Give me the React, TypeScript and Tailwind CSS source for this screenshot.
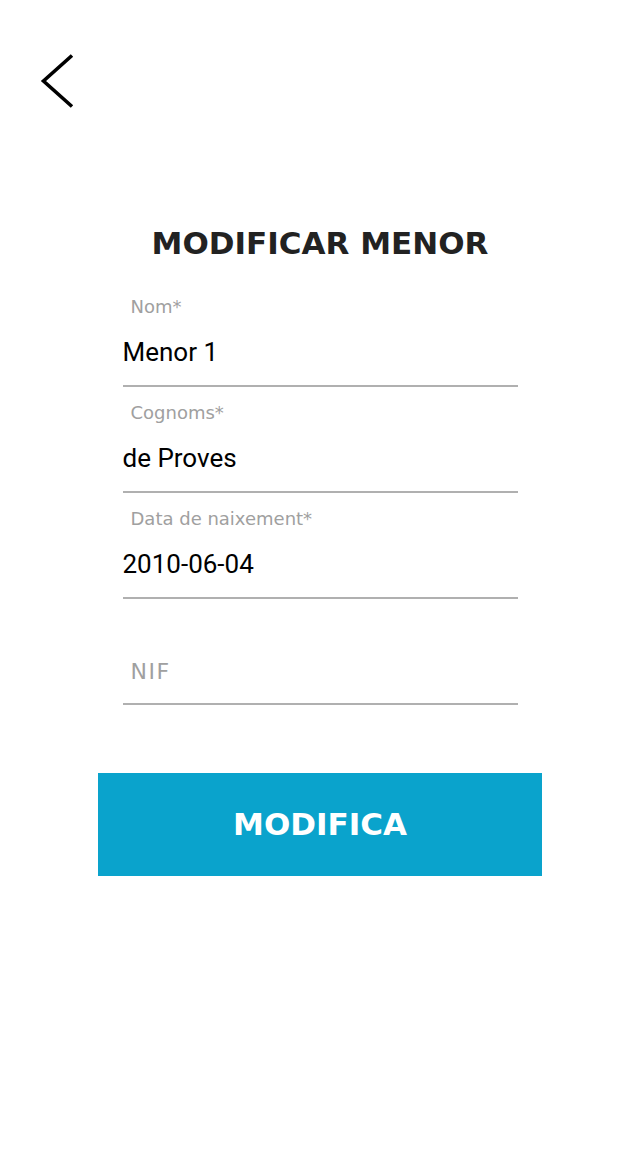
const fields = [
  { label: 'Nom*', value: 'Menor 1' },
  { label: 'Cognoms*', value: 'de Proves' },
  { label: 'Data de naixement*', value: '2010-06-04' },
];

export default function App() {
  return (
    <div className="min-h-[1158px] w-full bg-white font-['Roboto',sans-serif]">
      {/* back */}
      <div className="pl-[40px] pt-[54px]">
        <svg width="36" height="56" viewBox="0 0 36 56" fill="none">
          <path d="M32 1.5 L3.5 27 L32 52.5" stroke="#000" strokeWidth="3.6" strokeLinecap="butt" strokeLinejoin="miter" />
        </svg>
      </div>

      <h1 className="mt-[113px] text-center text-[31px] leading-[40px] font-bold text-[#222] font-['DejaVu_Sans',sans-serif]">
        MODIFICAR MENOR
      </h1>

      <form className="mx-auto mt-[18px] w-[395px]">
        {fields.map((f) => (
          <div key={f.label} className="h-[106px] border-b-2 border-[#b0b0b0]">
            <div className="pl-2 pt-[15px] text-[18px] leading-[22px] text-[#a0a0a0] font-['DejaVu_Sans',sans-serif]">
              {f.label}
            </div>
            <div className="mt-[19px] text-[26px] leading-[30px] text-black">{f.value}</div>
          </div>
        ))}
        <div className="h-[106px] border-b-2 border-[#b0b0b0]">
          <div className="pl-2 pt-[60px] text-[22px] leading-[26px] tracking-[1.5px] text-[#a0a0a0] font-['DejaVu_Sans',sans-serif]">
            NIF
          </div>
        </div>
      </form>

      <button
        type="button"
        className="mx-auto mt-[68px] flex h-[103px] w-[444px] items-center justify-center bg-[#0aa3cc] text-[31px] font-bold text-white font-['DejaVu_Sans',sans-serif]"
      >
        MODIFICA
      </button>
    </div>
  );
}
